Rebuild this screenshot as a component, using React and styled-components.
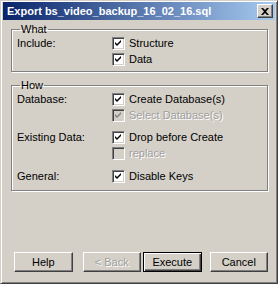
import React from 'react'
import styled, { createGlobalStyle } from 'styled-components'

const Global = createGlobalStyle`
  html, body {
    margin: 0;
    padding: 0;
    background: #ffffff;
  }
  * { box-sizing: border-box; }
`

const Window = styled.div`
  width: 278px;
  height: 284px;
  background: #d4d0c8;
  font-family: 'Liberation Sans', Arial, sans-serif;
  font-size: 11px;
  color: #000;
  border: 1px solid;
  border-color: #d4d0c8 #404040 #404040 #d4d0c8;
  box-shadow: inset 1px 1px #ffffff, inset -1px -1px #808080;
  padding: 1px 2px 2px 2px;
  display: flex;
  flex-direction: column;
`

const TitleBar = styled.div`
  height: 18px;
  background: linear-gradient(to right, #0a246a, #a6caf0);
  display: flex;
  align-items: center;
  justify-content: space-between;
  padding: 0 2px 0 4px;
`

const Title = styled.span`
  color: #fff;
  font-weight: bold;
  font-size: 11px;
  white-space: nowrap;
`

const CloseButton = styled.div`
  width: 16px;
  height: 14px;
  background: #d4d0c8;
  border: 1px solid;
  border-color: #fff #404040 #404040 #fff;
  box-shadow: inset -1px -1px #808080;
  display: flex;
  align-items: center;
  justify-content: center;
`

const Body = styled.div`
  flex: 1;
  display: flex;
  flex-direction: column;
  padding: 3px 7px 9px 8px;
`

const Group = styled.fieldset`
  margin: 0 0 ${p => p.$gap || 0}px 0;
  padding: ${p => p.$top || 0}px 4px ${p => p.$bottom || 4}px 5px;
  border: 1px solid #808080;
  box-shadow: inset 1px 1px #ffffff, 1px 1px #ffffff;
  min-width: 0;
`

const Legend = styled.legend`
  padding: 0 1px;
  margin-left: 3px;
  line-height: 12px;
`

const Row = styled.div`
  display: grid;
  grid-template-columns: 95px 1fr;
  align-items: start;
  margin-top: ${p => p.$gap || 0}px;
`

const Label = styled.div`
  line-height: 16px;
`

const Checks = styled.div`
  display: flex;
  flex-direction: column;
`

const CheckRow = styled.div`
  display: flex;
  align-items: center;
  height: 16px;
  line-height: 16px;
  color: ${p => (p.$disabled ? '#a0a0a0' : '#000')};
  text-shadow: ${p => (p.$disabled ? '1px 1px #fff' : 'none')};
`

const Box = styled.span`
  width: 13px;
  height: 13px;
  flex: none;
  margin-right: 4px;
  background: ${p => (p.$disabled ? '#d4d0c8' : '#fff')};
  border: 1px solid;
  border-color: #808080 #fff #fff #808080;
  box-shadow: inset 1px 1px #404040, inset -1px -1px #d4d0c8;
  display: flex;
  align-items: center;
  justify-content: center;
`

const Spacer = styled.div`
  flex: 1;
`

const Buttons = styled.div`
  display: flex;
  padding-left: 3px;
`

const Button = styled.div`
  width: 59px;
  height: 20px;
  margin-left: ${p => p.$ml || 0}px;
  display: flex;
  align-items: center;
  justify-content: center;
  background: #d4d0c8;
  border: 1px solid;
  border-color: ${p => (p.$default ? '#000' : '#fff #404040 #404040 #fff')};
  box-shadow: ${p =>
    p.$default
      ? 'inset 1px 1px #fff, inset -1px -1px #404040, inset -2px -2px #808080'
      : 'inset -1px -1px #808080'};
  color: ${p => (p.$disabled ? '#a0a0a0' : '#000')};
  text-shadow: ${p => (p.$disabled ? '1px 1px #fff' : 'none')};
`

const Check = ({ checked, disabled, children }) => (
  <CheckRow $disabled={disabled}>
    <Box $disabled={disabled}>
      {checked && (
        <svg width="7" height="7" viewBox="0 0 7 7">
          <path
            d="M0 2 L2 4 L6 0 L6 2 L2 6 L0 4 Z"
            fill={disabled ? '#808080' : '#000'}
          />
        </svg>
      )}
    </Box>
    {children}
  </CheckRow>
)

const App = () => {
  return (
    <Window>
      <Global />
      <TitleBar>
        <Title>Export bs_video_backup_16_02_16.sql</Title>
        <CloseButton>
          <svg width="8" height="7" viewBox="0 0 8 7">
            <path d="M0 0h2l2 2 2-2h2L5 3.5 8 7H6L4 5 2 7H0l3-3.5z" fill="#000" />
          </svg>
        </CloseButton>
      </TitleBar>
      <Body>
        <Group $top={0} $bottom={4} $gap={7}>
          <Legend>What</Legend>
          <Row>
            <Label>Include:</Label>
            <Checks>
              <Check checked>Structure</Check>
              <Check checked>Data</Check>
            </Checks>
          </Row>
        </Group>
        <Group $top={0} $bottom={6}>
          <Legend>How</Legend>
          <Row>
            <Label>Database:</Label>
            <Checks>
              <Check checked>Create Database(s)</Check>
              <Check checked disabled>Select Database(s)</Check>
            </Checks>
          </Row>
          <Row $gap={6}>
            <Label>Existing Data:</Label>
            <Checks>
              <Check checked>Drop before Create</Check>
              <Check disabled>replace</Check>
            </Checks>
          </Row>
          <Row $gap={7}>
            <Label>General:</Label>
            <Checks>
              <Check checked>Disable Keys</Check>
            </Checks>
          </Row>
        </Group>
        <Spacer />
        <Buttons>
          <Button>Help</Button>
          <Button $ml={10} $disabled>&lt; Back</Button>
          <Button $ml={2} $default>Execute</Button>
          <Button $ml={8}>Cancel</Button>
        </Buttons>
      </Body>
    </Window>
  )
}

export default App
